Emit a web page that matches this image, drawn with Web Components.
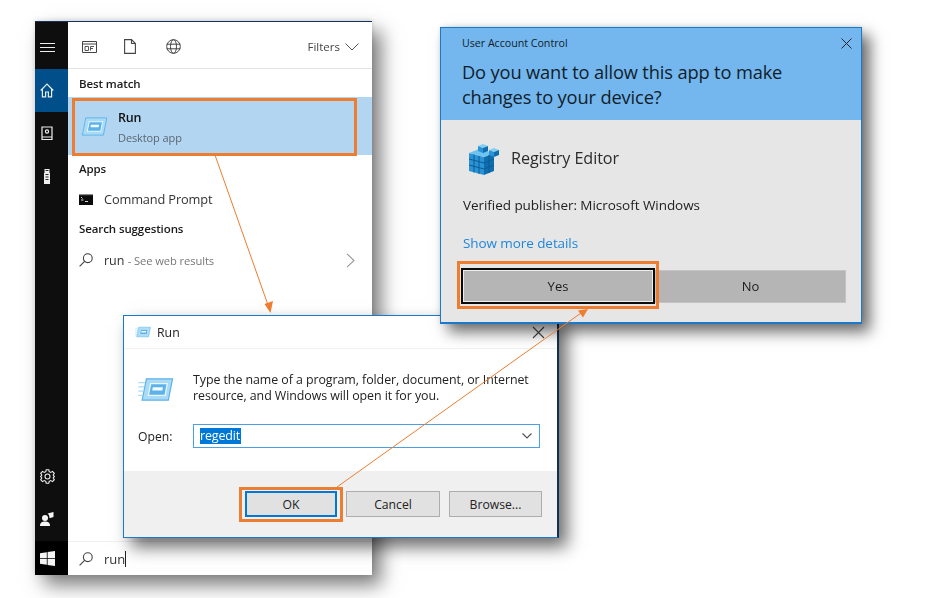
<!DOCTYPE html>
<html lang="en"><head><meta charset="utf-8"><title>Open Registry Editor</title>
<style>
html,body{margin:0;padding:0;background:#fff}
body{font-family:"Open Sans","Noto Sans",sans-serif;width:940px;height:598px;overflow:hidden}
x-stage{filter:blur(.35px)}
</style></head><body>
<x-stage>
  <x-search-window style="left:35px;top:21px"></x-search-window>
  <x-run-dialog style="left:123px;top:315px"></x-run-dialog>
  <x-uac-dialog style="left:440px;top:27px"></x-uac-dialog>
  <x-arrows></x-arrows>
  <x-callout style="left:72px;top:98px;width:285px;height:58px"></x-callout>
  <x-callout style="left:239px;top:487px;width:104px;height:35px"></x-callout>
  <x-callout style="left:457px;top:261px;width:202px;height:48px"></x-callout>
</x-stage>
<script>
const RUN_ICON=`<path d="M7.500 4.500H32L28 24.500H3.500Z" fill="#a9dbf6" stroke="#5fb2e8" stroke-width="1.100"/><path d="M11.500 9H27L25 20H9.300Z" fill="#5db2ea" stroke="#e8f6ff" stroke-width="1.200"/><path d="M13.500 12.500H23L22.500 15.500H13Z" fill="#f2fbff"/><path d="M0 8H6M0 12H5.500M0 16H4.800M0 20H4.200" stroke="#a6dcf8" stroke-width="1.200"/>`;
function el(name,css,html){
  customElements.define(name,class extends HTMLElement{
    constructor(){super();this.attachShadow({mode:'open'}).innerHTML=`<style>${css}</style>${html}`}
  });
}
el('x-stage',`:host{display:block;position:relative;width:940px;height:598px;overflow:hidden}`,`<slot></slot>`);
el('x-run-icon',`:host{display:block;line-height:0}svg{display:block;width:100%;height:100%}`,`<svg viewBox="0 0 33 29">${RUN_ICON}</svg>`);
el('x-callout',`:host{display:block;position:absolute;box-sizing:border-box;border:3px solid #ed7d31;z-index:5}`,``);
el('x-arrows',`:host{display:block;position:absolute;inset:0;z-index:6;pointer-events:none}svg{display:block}`,
`<svg width="940" height="598" viewBox="0 0 940 598"><g stroke="#ed7d31" stroke-width="1" fill="none"><path d="M215 155 268 305"/><path d="M337 487 581 313"/></g><g fill="#ed7d31"><path d="M270.500 313 264.500 304 273 301Z"/><path d="M588 309 578 310.500 583 317.500Z"/></g></svg>`);
el('x-section-label',`:host{display:block;font:600 11.5px/16px "Open Sans",sans-serif;color:#1a1a1a;letter-spacing:-.1px;padding-left:11px}`,`<slot></slot>`);

el('x-search-window',`
:host{display:flex;position:absolute;width:337px;height:554px;box-sizing:border-box;background:#fff;border-top:1px solid #13315c;box-shadow:9px 10px 18px rgba(0,0,0,.52),0 -1px 5px rgba(0,0,0,.12);color:#333}
nav{width:33px;background:#0e0e0e;display:flex;flex-direction:column;align-items:stretch;flex:none}
nav>div{height:43px;display:flex;align-items:center;justify-content:center;flex:none;padding-right:9px}
nav .home{background:#004f8b}
nav .top{height:47px;padding-top:3px;box-sizing:border-box}
nav .spacer{flex:1;height:auto}
nav .win{background:#000;height:34px}
main{flex:1;display:flex;flex-direction:column;min-width:0}
.bar{height:47px;box-sizing:border-box;border-bottom:1px solid #e4e4e4;display:flex;align-items:center;padding:3px 13px 0 14px;gap:28px}
.filters{margin-left:auto;display:flex;align-items:center;gap:5px;font-size:11.5px;color:#444}
.bar svg{display:block}
.best{margin-top:7px;height:21px}
.row{height:58px;background:#b2d6f2;display:flex;align-items:center;gap:10px;padding-left:11px;margin-bottom:6px}
x-run-icon{width:29px;height:25px}
.row>div{padding-top:3px}
.row b{display:block;font:600 12.500px/16px "Open Sans",sans-serif;color:#111;letter-spacing:-.2px}
.row small{display:block;font:11px/16px "Open Sans",sans-serif;color:#5c6670;margin-top:4px;letter-spacing:-.1px}
.apps{height:16px}
.cmd{height:30px;margin-top:7px;margin-bottom:7px;display:flex;align-items:center;gap:11px;padding-left:11px;font-size:12.800px;color:#333;letter-spacing:-.15px}
.sug{height:30px;margin-top:8px;display:flex;align-items:center;gap:11px;padding:0 17px 0 11px;font-size:12.500px;color:#333}
.sug span{color:#777;font-size:11.200px;letter-spacing:-.1px}
.sug svg:last-child{margin-left:auto}
.grow{flex:1}
.box{height:34px;background:#fff;border-top:1px solid #f0f0f0;display:flex;align-items:center;gap:11px;padding-left:11px;font-size:13px;color:#333;box-sizing:border-box}
.box i{display:inline-block;width:1px;height:16px;background:#222;vertical-align:-3px}
`,`
<nav>
 <div class="top"><svg width="15" height="11" viewBox="0 0 15 11" fill="none" stroke="#eee" stroke-width="1.100"><path d="M0 1.500H15M0 5.500H15M0 9.500H15"/></svg></div>
 <div class="home"><svg width="14" height="15" viewBox="0 0 14 15" fill="none" stroke="#e6eef5" stroke-width="1.200"><path d="M.7 7.500 7 1.200 13.300 7.500M2.400 6V13.800H5.600V9H8.400V13.800H11.600V6"/></svg></div>
 <div><svg width="12" height="15" viewBox="0 0 12 15" fill="none" stroke="#eee" stroke-width="1.200"><path d="M1 1H11V13.500H1ZM1 11H11"/><circle cx="6" cy="5.500" r="1.600"/></svg></div>
 <div><svg width="8" height="15" viewBox="0 0 8 15"><path d="M1.500 0H6.500V4H7V15H1V4H1.500Z" fill="#eee"/><path d="M2.500 1.500H5.500M2.500 5.500H5.500M2.500 8H5.500M2.500 10.500H5.500" stroke="#111" stroke-width=".9"/></svg></div>
 <div class="spacer"></div>
 <div><svg width="15" height="15" viewBox="0 0 15 15" fill="none" stroke="#eee" stroke-width="1.100"><path d="M6.200.8H8.800L9.200 2.700 10.800 3.400 12.500 2.400 14.300 4.300 13.200 6 13.800 6.800 14.500 7.500 13.800 8.200 13.200 9 14.300 10.700 12.500 12.600 10.800 11.600 9.200 12.300 8.800 14.200H6.200L5.800 12.300 4.200 11.600 2.500 12.600.7 10.700 1.800 9 1.200 8.200.5 7.500 1.200 6.800 1.800 6 .7 4.300 2.500 2.400 4.200 3.400 5.800 2.700Z"/><circle cx="7.500" cy="7.500" r="2.500"/></svg></div>
 <div style="padding-bottom:2px;box-sizing:border-box"><svg width="14" height="14" viewBox="0 0 14 14" fill="#f4f4f4"><circle cx="5" cy="6" r="3"/><path d="M0 14C0 10.500 2 9.500 5 9.500S10 10.500 10 14Z"/><path d="M7.500 1.500 13.500 0V5L9.500 6.200C9.500 4 9 2.500 7.500 1.500Z"/></svg></div>
 <div class="win"><svg width="15" height="15" viewBox="0 0 15 15" fill="#f4f4f4"><path d="M0 2.200 6.800 1.200V7H0ZM7.600 1 15 0V7H7.600ZM0 7.800H6.800V13.800L0 12.800ZM7.600 7.800H15V15L7.600 14Z"/></svg></div>
</nav>
<main>
 <div class="bar">
  <svg width="15" height="12" viewBox="0 0 15 12" fill="none" stroke="#444" stroke-width="1"><path d="M.5.500H14.500V11.500H.5ZM.5 3H14.500"/><path d="M3 5.500H6.500V9.500H3ZM8.500 5.500H12M8.500 7.500H11M8.500 5.500V9.500" stroke-width=".9"/></svg>
  <svg width="12" height="15" viewBox="0 0 12 15" fill="none" stroke="#444" stroke-width="1.100" style="margin-left:-1px"><path d="M.6.600H7.500L11.400 4.500V14.400H.6ZM7.500.600V4.500H11.400"/></svg>
  <svg width="15" height="15" viewBox="0 0 15 15" fill="none" stroke="#444" stroke-width="1" style="margin-left:2px"><circle cx="7.500" cy="7.500" r="6.800"/><ellipse cx="7.500" cy="7.500" rx="3" ry="6.800"/><path d="M.7 5.200H14.300M.7 9.800H14.300"/></svg>
  <div class="filters">Filters <svg width="14" height="8" viewBox="0 0 14 8" fill="none" stroke="#555" stroke-width="1"><path d="M.5.500 7 7 13.500.500"/></svg></div>
 </div>
 <x-section-label class="best">Best match</x-section-label>
 <div class="row"><x-run-icon></x-run-icon><div><b>Run</b><small>Desktop app</small></div></div>
 <x-section-label class="apps">Apps</x-section-label>
 <div class="cmd"><svg width="14" height="11" viewBox="0 0 14 11"><path d="M0 0H14V11H0Z" fill="#0b0b0b"/><path d="M0 0H14V1.200H0Z" fill="#888"/><path d="M2 3 3.500 4.500M2 6H4.500M6 7.500H9" stroke="#eee" stroke-width=".9" fill="none"/></svg>Command Prompt</div>
 <x-section-label class="apps">Search suggestions</x-section-label>
 <div class="sug"><svg width="14" height="14" viewBox="0 0 14 14" fill="none" stroke="#444" stroke-width="1.100"><circle cx="8.800" cy="5.200" r="4.400"/><path d="M5.600 8.400.6 13.400"/></svg><div>run <span>- See web results</span></div><svg width="9" height="15" viewBox="0 0 9 15" fill="none" stroke="#999" stroke-width="1.100"><path d="M1 .8 8 7.500 1 14.200"/></svg></div>
 <div class="grow"></div>
 <div class="box"><svg width="14" height="14" viewBox="0 0 14 14" fill="none" stroke="#444" stroke-width="1.100"><circle cx="8.800" cy="5.200" r="4.400"/><path d="M5.600 8.400.6 13.400"/></svg><div>run<i></i></div></div>
</main>`);

el('x-run-dialog',`
:host{display:flex;flex-direction:column;position:absolute;box-sizing:border-box;width:436px;height:223px;background:#fff;border:1px solid #1979ca;border-right:2px solid #12304f;box-shadow:8px 9px 16px rgba(0,0,0,.58);color:#222;font-size:12px}
.title{height:33px;box-sizing:border-box;border-bottom:1px solid #f1f1f1;display:flex;align-items:center;gap:6px;padding-left:11px;font-size:12.300px;position:relative}
.title x-run-icon{width:16px;height:14px}
.close{margin-left:auto;margin-right:12px}
.msg{display:flex;gap:19px;padding:23px 0 0 14px;height:30px}
.msg x-run-icon{width:36px;height:31px;margin-top:2px;flex:none}
.msg p{margin:0;font-size:12.400px;line-height:16px;letter-spacing:-.06px;white-space:nowrap}
.open{display:flex;align-items:center;padding-left:14px;margin-top:22px;height:24px;font-size:12.200px}
.open>div:first-child{width:55px}
.input{box-sizing:border-box;width:347px;height:24px;border:1px solid #4b9fe3;display:flex;align-items:center;padding:0 7px 0 6px}
.input span{background:#0078d7;color:#fff;height:16px;line-height:15px;width:41px;font-size:12.500px;letter-spacing:-.15px}
.input svg{margin-left:auto}
.grow{flex:1}
.foot{height:66px;background:#f0f0f0;display:flex;align-items:flex-start;padding:20px 0 0 121px;gap:9px;box-sizing:border-box;flex:none}
button{box-sizing:border-box;width:94px;height:26px;background:#e1e1e1;border:1px solid #adadad;font:12.200px "Open Sans",sans-serif;color:#222;padding:0}
button.ok{width:92px;border:2px solid #0078d7}
button:last-child{width:93px}
`,`
<div class="title"><x-run-icon></x-run-icon>Run<svg class="close" width="13" height="13" viewBox="0 0 13 13" stroke="#444" stroke-width="1.100"><path d="M1 1 12 12M12 1 1 12"/></svg></div>
<div class="msg"><x-run-icon></x-run-icon><p>Type the name of a program, folder, document, or Internet<br>resource, and Windows will open it for you.</p></div>
<div class="open"><div>Open:</div><div class="input"><span>regedit</span><svg width="10" height="6" viewBox="0 0 10 6" fill="none" stroke="#555" stroke-width="1.200"><path d="M.5.500 5 5 9.500.500"/></svg></div></div>
<div class="grow"></div>
<div class="foot"><button class="ok">OK</button><button>Cancel</button><button>Browse...</button></div>`);

el('x-uac-dialog',`
:host{display:flex;flex-direction:column;position:absolute;box-sizing:border-box;width:422px;height:297px;background:#e6e6e6;border:1px solid #1979ca;border-bottom-width:2px;box-shadow:8px 8px 14px rgba(0,0,0,.58),0 -1px 4px rgba(0,0,0,.1);color:#222}
header{height:92px;background:#74b7ee;flex:none;padding:7px 9px 0 21px;box-sizing:border-box;color:#111d2a;position:relative}
.t{display:flex;align-items:center;justify-content:space-between;font-size:10.700px;height:16px;letter-spacing:-.03px}
h1{margin:8px 0 0;font:400 18.300px/25px "Open Sans",sans-serif;letter-spacing:-.15px}
.app{display:flex;align-items:center;gap:11px;padding:20px 0 0 27px;height:36px;font-size:16.200px;letter-spacing:-.1px;color:#2b2b2b}
.pub{font-size:13.500px;padding:19px 0 0 22px;line-height:20px;letter-spacing:-.05px}
.more{font-size:13.500px;padding:18px 0 0 22px;line-height:20px;color:#1e87dd;letter-spacing:-.08px}
.btns{display:flex;padding:15px 0 0 20px;align-items:center}
button{box-sizing:border-box;height:33px;width:191px;background:#b5b5b5;border:1px solid #c4c4c4;font:13px "Open Sans",sans-serif;color:#1c1c1c;padding:0}
button.yes{width:194px;height:36px;border:0;outline:0;box-shadow:inset 0 0 0 2px #0a0a0a,inset 0 0 0 3px #eee}
`,`
<header><div class="t">User Account Control<svg width="11" height="11" viewBox="0 0 11 11" stroke="#223" stroke-width="1"><path d="M.5.500 10.500 10.500M10.500.500 .5 10.500"/></svg></div><h1>Do you want to allow this app to make<br>changes to your device?</h1></header>
<div class="app"><svg width="32" height="35" viewBox="0 0 32 35">
<g><path d="M1 12 16 16V34L1 30Z" fill="#2a93d5"/><path d="M16 16 26 12V30L16 34Z" fill="#0f6fae"/><path d="M1 12 11 8 26 12 16 16Z" fill="#6fc3ef"/>
<path d="M6 13.500V31.500M11 14.800V33M1 18 16 22M1 24 16 28M21 14V32M16 22 26 18M16 28 26 24" stroke="#0b5c94" stroke-width="1" fill="none"/>
<path d="M10 5 15 3 20 5 15 7Z" fill="#7fd0f5"/><path d="M10 5 15 7V12L10 10Z" fill="#2a93d5"/><path d="M20 5 15 7V12L20 10Z" fill="#0f6fae"/>
<path d="M21 9 26 7 31 9 26 11Z" fill="#7fd0f5"/><path d="M21 9 26 11V16L21 14Z" fill="#2a93d5"/><path d="M31 9 26 11V16L31 14Z" fill="#0f6fae"/></g></svg>Registry Editor</div>
<div class="pub">Verified publisher: Microsoft Windows</div>
<div class="more">Show more details</div>
<div class="btns"><button class="yes">Yes</button><button>No</button></div>`);
</script>
</body></html>
